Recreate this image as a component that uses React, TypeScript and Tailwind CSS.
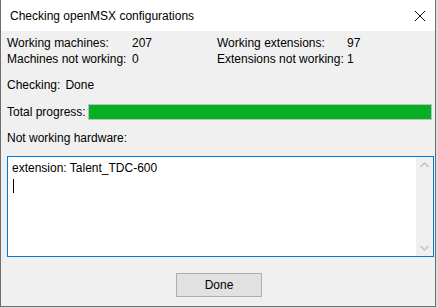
import React from 'react';

const font = { fontFamily: '"Liberation Sans", Arial, sans-serif' };

const Stat: React.FC<{ label: string; value: string }> = ({ label, value }) => (
  <>
    <span>{label}</span>
    <span>{value}</span>
  </>
);

const App: React.FC = () => {
  return (
    <div className="w-[438px] h-[308px] bg-[#dcdcdc] text-[12px] text-black leading-[16px] whitespace-nowrap" style={font}>
      <div className="w-[436px] h-[307px] flex flex-col bg-[#f0f0f0] border-x border-b border-[#6e6e6e]">
        {/* Title bar */}
        <div className="h-[31px] bg-white flex items-center justify-between pl-[9px] pr-[8px] flex-shrink-0">
          <span className="text-[12px] pt-[1px]">Checking openMSX configurations</span>
          <svg width="12" height="12" viewBox="0 0 12 12" className="mr-[1px] mt-[1px]">
            <path d="M1 1 L11 11 M11 1 L1 11" stroke="#111" strokeWidth="1" />
          </svg>
        </div>

        {/* Content */}
        <div className="flex-1 flex flex-col pl-[6px] pt-[4px]">
          <div className="grid grid-cols-[125px_85px_130px_1fr]">
            <Stat label="Working machines:" value="207" />
            <Stat label="Working extensions:" value="97" />
            <Stat label="Machines not working:" value="0" />
            <Stat label="Extensions not working:" value="1" />
          </div>

          <div className="mt-[10px] flex gap-[5px]">
            <span>Checking:</span>
            <span>Done</span>
          </div>

          <div className="mt-[11px] flex items-center h-[16px]">
            <span className="w-[81px]">Total progress:</span>
            <div className="w-[344px] h-[16px] border border-[#bcbcbc] bg-[#e6e6e6]">
              <div className="h-full w-full bg-[#06b025]" />
            </div>
          </div>

          <div className="mt-[10px]">Not working hardware:</div>

          {/* Text area */}
          <div className="mt-[10px] w-[427px] h-[101px] border border-[#0078d7] bg-white flex">
            <div className="flex-1 pl-[4px] pt-[3px]">
              <div>extension: Talent_TDC-600</div>
              <div className="w-px h-[14px] bg-black mt-[3px] ml-[1px]" />
            </div>
            <div className="w-[17px] h-full bg-[#f0f0f0] flex flex-col justify-between items-center py-[5px]">
              <svg width="9" height="6" viewBox="0 0 9 6">
                <path d="M0.5 5 L4.5 1 L8.5 5" fill="none" stroke="#c2c2c2" strokeWidth="1.3" />
              </svg>
              <svg width="9" height="6" viewBox="0 0 9 6">
                <path d="M0.5 1 L4.5 5 L8.5 1" fill="none" stroke="#c2c2c2" strokeWidth="1.3" />
              </svg>
            </div>
          </div>

          <div className="flex justify-center mt-[16px] pr-[4px]">
            <button className="w-[86px] h-[24px] bg-[#e1e1e1] border border-[#adadad] text-[12px] flex items-center justify-center">
              Done
            </button>
          </div>
        </div>
      </div>
    </div>
  );
};

export default App;
